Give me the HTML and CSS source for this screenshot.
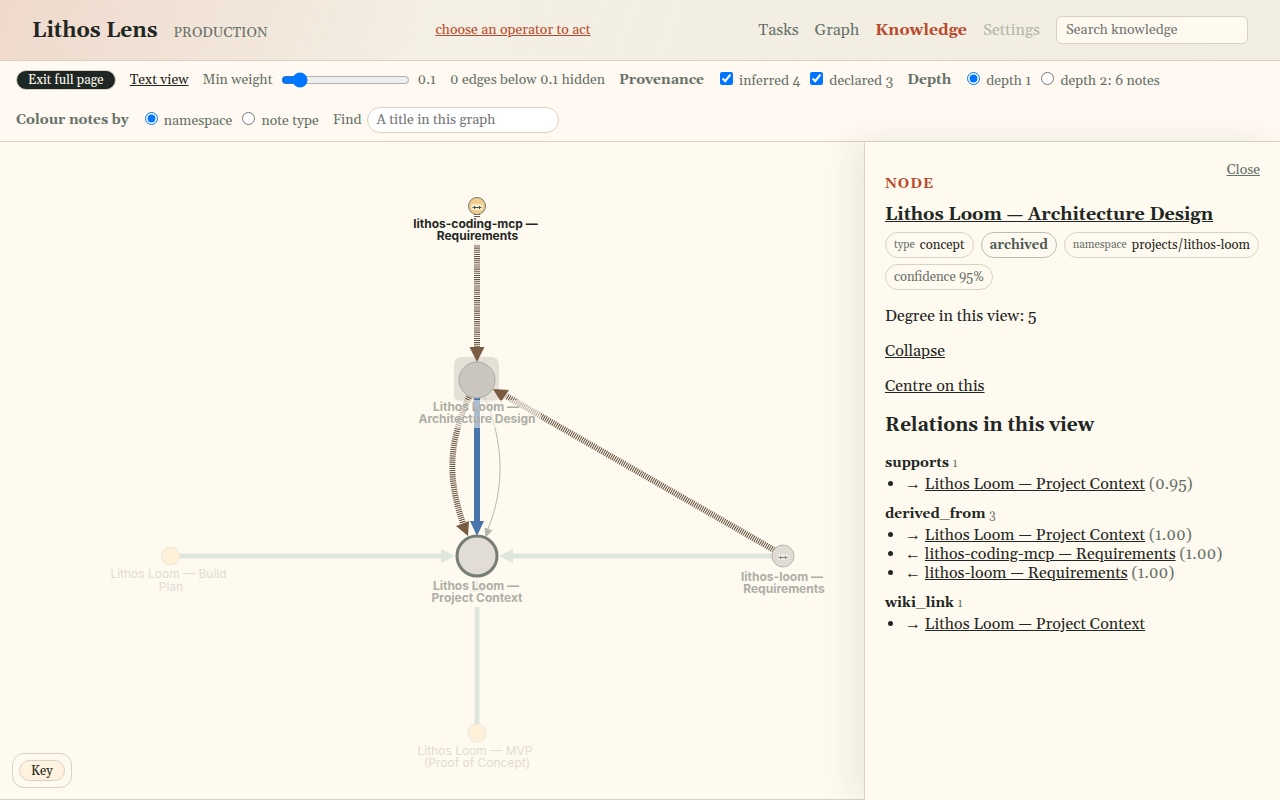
FILE: index.html
```html
<!DOCTYPE html>
<html lang="en">
<head>
<meta charset="utf-8">
<meta name="viewport" content="width=device-width, initial-scale=1">
<title>Lithos Lens</title>
<link rel="stylesheet" href="styles.css">
</head>
<body>
<header class="site-header">
  <div class="brand"><a class="brand-name" href="#">Lithos Lens</a><span class="brand-env">PRODUCTION</span></div>
  <a class="operator" href="#">choose an operator to act</a>
  <nav class="site-nav">
    <a href="#">Tasks</a>
    <a href="#">Graph</a>
    <a class="current" href="#">Knowledge</a>
    <a class="disabled" href="#">Settings</a>
    <input class="site-search" type="search" placeholder="Search knowledge" aria-label="Search knowledge">
  </nav>
</header>

<form class="toolbar">
  <button class="pill-dark" type="button">Exit full page</button>
  <a class="text-view" href="#">Text view</a>
  <div class="weight"><label for="weight">Min weight</label><input id="weight" type="range" min="0" max="1" step="0.05" value="0.1"><output for="weight">0.1</output></div>
  <span>0 edges below 0.1 hidden</span>
  <div class="group" role="group" aria-labelledby="g-prov">
    <strong id="g-prov">Provenance</strong>
    <div class="options">
      <label><input type="checkbox" checked> inferred 4</label>
      <label><input type="checkbox" checked> declared 3</label>
    </div>
  </div>
  <div class="group" role="group" aria-labelledby="g-depth">
    <strong id="g-depth">Depth</strong>
    <div class="options">
      <label><input type="radio" name="depth" checked> depth 1</label>
      <label><input type="radio" name="depth"> depth 2: 6 notes</label>
    </div>
  </div>
  <div class="group" role="group" aria-labelledby="g-colour">
    <strong id="g-colour">Colour notes by</strong>
    <div class="options">
      <label><input type="radio" name="colour" checked> namespace</label>
      <label><input type="radio" name="colour"> note type</label>
    </div>
  </div>
  <div class="find"><label for="find">Find</label><input id="find" type="text" placeholder="A title in this graph"></div>
</form>

<main class="workspace">
  <section class="stage" aria-label="Knowledge graph">
    <svg class="graph" viewBox="0 0 864 657" role="img" aria-label="Notes and their relations">
      <rect class="selection" x="454" y="215" width="45" height="45" rx="7"/>
      <g class="edge-faint">
        <path d="M179 414H442"/><path d="M774 414H512"/><path d="M477 582V465"/>
      </g>
      <path class="head-faint" d="M441 407l14 7-14 7zM513 407l-14 7 14 7zM470 450l7-14 7 14z"/>

      <path class="edge-derived" d="M477 72V208"/>
      <path class="edge-derived" d="M469 255C449 300 447 335 463 381"/>
      <path class="edge-derived" d="M774 408L506 254"/>
      <path class="edge-supports" d="M477 256V381"/>
      <path class="edge-wiki" d="M485 256C504 301 505 345 488 387"/>
      <path class="head-derived" d="M469.500 205h15l-7.500 15zM493 247l16 1-8 12zM456 384l13-5-1 15z"/>
      <path class="head-supports" d="M470 379h14l-7 15z"/>
      <path class="head-wiki" d="M484.500 385.500l8 3-7 7z"/>

      <circle class="node-selected" cx="477" cy="238" r="18"/>
      <circle class="node-centre" cx="477" cy="414" r="20"/>
      <circle class="node-gold" cx="477" cy="64" r="8.500"/>
      <circle class="node-grey" cx="783" cy="414" r="11"/>
      <circle class="node-cream" cx="170.500" cy="414" r="9"/>
      <circle class="node-cream" cx="477" cy="591" r="9"/>

      <g class="glyph">
        <path class="glyph-halo" d="M474 65H480"/>
        <path class="glyph-line" d="M472.500 65.500H481.500M474.500 64v3M479.500 64v3"/>
      </g>
      <g class="glyph glyph-dim">
        <path class="glyph-halo" d="M780 415H786"/>
        <path class="glyph-line" d="M778.500 415.500H787.500M780.500 414v3M785.500 414v3"/>
      </g>

      <rect class="plate plate-solid" x="408" y="75" width="134" height="28"/>
      <rect class="plate" x="413" y="258" width="128" height="28"/>
      <rect class="plate" x="426" y="436" width="102" height="29"/>
      <g class="label">
        <text x="475.500" y="86">lithos-coding-mcp —</text><text x="477.500" y="98">Requirements</text>
      </g>
      <g class="label label-dim">
        <text x="476" y="269">Lithos Loom —</text><text x="477" y="281">Architecture Design</text>
        <text x="476" y="448">Lithos Loom —</text><text x="477" y="460">Project Context</text>
        <text x="782" y="439">lithos-loom —</text><text x="784" y="451">Requirements</text>
      </g>
      <g class="label label-faint">
        <text x="168.500" y="436">Lithos Loom — Build</text><text x="171" y="449">Plan</text>
        <text x="475" y="613">Lithos Loom — MVP</text><text x="477" y="625">(Proof of Concept)</text>
      </g>
    </svg>
    <div class="key"><button type="button">Key</button></div>
  </section>

  <aside class="panel">
    <a class="close" href="#">Close</a>
    <p class="kicker">NODE</p>
    <h2><a href="#">Lithos Loom — Architecture Design</a></h2>
    <div class="chips">
      <span class="chip"><small>type</small> <b>concept</b></span>
      <span class="chip chip-status">archived</span>
      <span class="chip"><small>namespace</small> <b>projects/lithos-loom</b></span>
      <span class="chip">confidence 95%</span>
    </div>
    <p>Degree in this view: 5</p>
    <p><a href="#">Collapse</a></p>
    <p><a href="#">Centre on this</a></p>
    <h3>Relations in this view</h3>
    <h4>supports <span>1</span></h4>
    <ul>
      <li><i>→</i> <a href="#">Lithos Loom — Project Context</a> <span>(0.95)</span></li>
    </ul>
    <h4>derived_from <span>3</span></h4>
    <ul>
      <li><i>→</i> <a href="#">Lithos Loom — Project Context</a> <span>(1.00)</span></li>
      <li><i>←</i> <a href="#">lithos-coding-mcp — Requirements</a> <span>(1.00)</span></li>
      <li><i>←</i> <a href="#">lithos-loom — Requirements</a> <span>(1.00)</span></li>
    </ul>
    <h4>wiki_link <span>1</span></h4>
    <ul>
      <li><i>→</i> <a href="#">Lithos Loom — Project Context</a></li>
    </ul>
  </aside>
</main>
</body>
</html>
```
FILE: styles.css
```css
:root {
  --ink: #1f2724;
  --muted: #66716a;
  --line: #d9d2c3;
  --paper: #fffaef;
  --bar: #fff9f1;
  --accent: #b94a2c;
}

* { box-sizing: border-box; }

body {
  margin: 0;
  min-height: 100vh;
  display: flex;
  flex-direction: column;
  background: var(--paper);
  color: var(--ink);
  font: 16px/19px Georgia, Gelasio, "Liberation Serif", serif;
}

a { color: inherit; }
input, button { font-family: inherit; }
input::placeholder { color: #757575; }

.site-header {
  display: flex;
  align-items: center;
  justify-content: space-between;
  gap: 16px;
  padding: 16px 32px;
  border-bottom: 1px solid var(--line);
  background: linear-gradient(110deg, #efd9cc 0%, #f4efe4 34%, #f2ede1 100%);
}
.brand { display: flex; align-items: baseline; gap: 16px; padding-top: 2px; }
.brand-name { font-size: 21px; line-height: 26px; font-weight: 700; text-decoration: none; }
.brand-env { font-size: 14px; color: var(--muted); }
.operator { font-size: 14px; color: var(--accent); }
.site-nav { display: flex; align-items: center; gap: 16px; color: var(--muted); }
.site-nav a { text-decoration: none; }
.site-nav .current { color: var(--accent); font-weight: 700; }
.site-nav .disabled { opacity: .45; }
.site-search {
  width: 192px;
  height: 28px;
  padding: 0 9px;
  border: 1px solid var(--line);
  border-radius: 6px;
  background: var(--paper);
  font-size: 14px;
}

.toolbar {
  display: flex;
  flex-wrap: wrap;
  align-items: center;
  gap: 14px;
  padding: 6px 16px 8px;
  border-bottom: 1px solid var(--line);
  background: var(--bar);
  color: var(--muted);
  font-size: 14px;
}
.toolbar > * { min-height: 26px; display: flex; align-items: center; }
.toolbar .pill-dark {
  min-height: 20px;
  height: 20px;
  padding: 0 11px;
  border: 1px solid var(--line);
  border-radius: 999px;
  background: var(--ink);
  color: var(--paper);
  font-size: 13px;
}
.text-view { color: var(--ink); }
.weight, .find { gap: 6px; }
.weight input { width: 129px; }
.group { gap: 16px; }
.options { display: flex; gap: 8px; padding-top: 2px; }
.options label { display: flex; align-items: center; gap: 6px; }
.options input { width: 13px; height: 13px; margin: 0 0 5px; }
.find input {
  width: 192px;
  height: 26px;
  padding: 0 8px;
  border: 1px solid var(--line);
  border-radius: 13px;
  background: #fff;
  font-size: 14px;
}
.options label + label { margin-left: 2px; }

.workspace { flex: 1; display: flex; }
.stage {
  position: relative;
  flex: 1;
  min-width: 0;
  display: flex;
  border-bottom: 1px solid var(--line);
}
.graph { width: 100%; height: 100%; flex: 1; }

.edge-faint path { fill: none; stroke: #dee6dd; stroke-width: 5; }
.head-faint { fill: #dee6dd; }
.edge-derived { fill: none; stroke: #64523f; stroke-width: 6; stroke-dasharray: 1.05 1.05; }
.head-derived { fill: #7a5c43; }
.edge-supports { stroke: #4774aa; stroke-width: 6; }
.head-supports { fill: #4774aa; }
.edge-wiki { fill: none; stroke: #b9b8ad; stroke-width: 1; }
.head-wiki { fill: #b5b6ad; }

.selection { fill: #e4e0d5; }
.node-selected { fill: #cac6bf; stroke: #a9aba3; stroke-width: 1; }
.node-centre { fill: #e1dcd5; stroke: #757d75; stroke-width: 3; }
.node-gold { fill: #f0cd8d; stroke: #777a72; stroke-width: 1; }
.node-grey { fill: #e0dcd3; stroke: #b7b7ad; stroke-width: 1; }
.node-cream { fill: #fff1da; stroke: #ebe6da; stroke-width: 1; }
.glyph-halo { stroke: #fffaef; stroke-width: 6; stroke-linecap: round; opacity: .7; }
.glyph-line { fill: none; stroke: #46514b; stroke-width: 1; }
.glyph-dim { opacity: .6; }

.plate { fill: #fffaef; opacity: .55; }
.plate-solid { opacity: .9; }
.label { font: 700 12px Inter, sans-serif; text-anchor: middle; fill: #1f2724; }
.label-dim { fill: #acafa6; }
.label-faint { font-weight: 400; fill: #dfdcd1; }

.key {
  position: absolute;
  left: 12px;
  bottom: 11px;
  padding: 6px;
  border: 1px solid var(--line);
  border-radius: 12px;
  background: var(--paper);
}
.key button {
  display: block;
  height: 21px;
  padding: 0 11px;
  border: 1px solid var(--line);
  border-radius: 11px;
  background: #fff3df;
  color: var(--ink);
  font-size: 13px;
}

.panel {
  position: relative;
  width: 416px;
  padding: 20px;
  border-left: 1px solid var(--line);
  background: var(--paper);
  box-shadow: -12px 0 32px rgba(31, 39, 36, .08);
}
.close { position: absolute; top: 19px; right: 20px; color: var(--muted); font-size: 14px; }
.panel p { margin: 0 0 16px; }
.panel .kicker {
  margin: 13px 0 10px;
  color: var(--accent);
  font-size: 14px;
  font-weight: 700;
  letter-spacing: 1px;
}
.panel h2 { margin: 0 0 6px; font-size: 18px; line-height: 22px; }
.chips { display: flex; flex-wrap: wrap; gap: 6px 7px; margin-bottom: 17px; }
.chip {
  display: flex;
  align-items: center;
  gap: 5px;
  height: 26px;
  padding: 0 8px;
  border: 1px solid var(--line);
  border-radius: 13px;
  color: var(--muted);
  font-size: 13px;
}
.chip small { font-size: 11px; }
.chip b { color: var(--ink); font-weight: 400; }
.chip-status { border-color: #b9bdb5; color: #4d5954; font-weight: 700; }
.panel h3 { margin: 18px 0; font-size: 19px; line-height: 22px; }
.panel h4 { margin: 12px 0 1px; font-size: 14px; line-height: 19px; }
.panel h4 span { font-size: 12px; font-weight: 400; color: var(--muted); }
.panel ul { margin: 0; padding-left: 20px; }
.panel li { height: 19px; }
.panel li i { font-family: "Liberation Sans", sans-serif; font-style: normal; }
.panel li span { color: var(--muted); }
```
